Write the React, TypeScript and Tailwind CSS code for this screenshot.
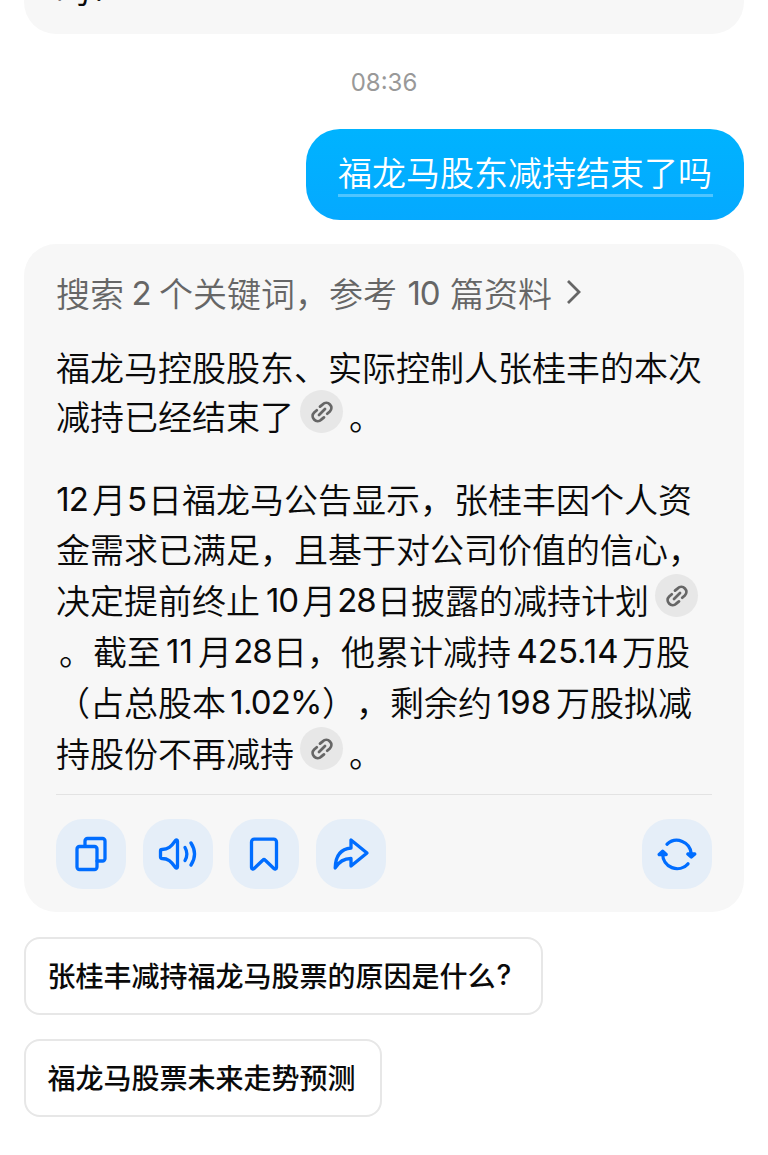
import type { ReactNode } from 'react';

function Num({ children, className }: { children: ReactNode; className: string }) {
  return <span className={`shrink-0 pt-[3px] text-center font-['Inter',sans-serif] text-[33px] font-normal ${className}`}>{children}</span>;
}

function Line({ children, className = '' }: { children: ReactNode; className?: string }) {
  return <div className={`flex items-center whitespace-pre ${className}`}>{children}</div>;
}

function LinkBadge() {
  return (
    <button className="mx-1.5 mb-[8px] flex size-[43px] shrink-0 items-center justify-center rounded-full bg-[#e7e7e7]">
      <svg width="24" height="24" viewBox="0 0 24 24" fill="none" stroke="#666" strokeWidth="2.8" strokeLinecap="round" strokeLinejoin="round">
        <path d="M9 15 15 9" />
        <path d="M10 6.600 12.800 4.300a5 5 0 0 1 7 7.200l-2.600 2.200" />
        <path d="M6.800 10.300 4.200 12.500a5 5 0 0 0 7 7.200l2.800-2.300" />
      </svg>
    </button>
  );
}

function ActionButton({ children, label }: { children: ReactNode; label: string }) {
  return (
    <button aria-label={label} className="flex size-[70px] items-center justify-center rounded-[27px] bg-[#e5eef8]">
      <svg width="40" height="40" viewBox="0 0 40 40" fill="none" stroke="#006dff" strokeWidth="3.3" strokeLinecap="round" strokeLinejoin="round">
        {children}
      </svg>
    </button>
  );
}

function Suggestion({ children, className }: { children: ReactNode; className: string }) {
  return (
    <button className={`flex h-[78px] items-center rounded-2xl border-2 border-[#e7e7e7] bg-white pb-[3px] pl-[21.5px] text-[28px] font-medium whitespace-nowrap ${className}`}>
      {children}
    </button>
  );
}

export default function App() {
  return (
    <div className="h-[1155px] w-[768px] overflow-hidden bg-white px-6 font-['Noto_Sans_CJK_SC',sans-serif] text-[34px] text-[#0a0a0a] [text-spacing-trim:space-all]">
      <div className="flex h-[34px] items-end rounded-b-[32px] bg-[#f7f7f7] px-8 pb-[28px] leading-[34px]">
        <span>吗</span>
        <span className="pl-px font-['Inter',sans-serif]">?</span>
      </div>

      <div className="mt-8 text-center font-['Inter',sans-serif] text-2xl leading-[34px] text-[#999]">08:36</div>

      <div className="mt-[29px] flex justify-end">
        <div className="h-[91px] w-[438px] rounded-[34px] bg-linear-to-b from-[#00b3ff] to-[#05a9ff] px-[31.5px] pt-[18px] text-white">
          <div className="h-[50px] border-b-[3px] border-white/30 text-center leading-[50px] font-[350]">福龙马股东减持结束了吗</div>
        </div>
      </div>

      <div className="mt-6 h-[668px] rounded-[32px] bg-[#f7f7f7] px-8 pt-[23px]">
        <Line className="h-[50px] font-[350] text-[#666]">
          <span>搜索</span>
          <Num className="w-[35px]">2</Num>
          <span>个关键词，</span>
          <span>参考</span>
          <Num className="w-[53px] tracking-[-1px]">10</Num>
          <span>篇资料</span>
          <svg className="ml-3.5" width="16" height="26" viewBox="0 0 16 26" fill="none" stroke="#666" strokeWidth="2.8">
            <path d="M2 2 13 13 2 24" />
          </svg>
        </Line>

        <div className="mt-[25px] font-[350]">
          <Line className="h-[49px]">福龙马控股股东、实际控制人张桂丰的本次</Line>
          <Line className="h-[49px]">
            减持已经结束了
            <LinkBadge />
            。
          </Line>
        </div>

        <div className="mt-[33px] font-[350]">
          <Line className="h-[50px]">
            <Num className="w-9 pr-1 tracking-[-1px]">12</Num>月<Num className="w-[22px]">5</Num>日福龙马公告显示，张桂丰因个人资
          </Line>
          <Line className="h-[51px]">金需求已满足，且基于对公司价值的信心，</Line>
          <Line className="h-[51px]">
            决定提前终止<Num className="w-[42px] pl-0.5 tracking-[-1px]">10</Num>月<Num className="w-[41px] tracking-[-1px]">28</Num>日披露的减持计划
            <LinkBadge />
          </Line>
          <Line className="h-[51px]">
            <span className="ml-[3px]">。截至</span>
            <Num className="w-[37px]">11</Num>月<Num className="w-[41px] tracking-[-1px]">28</Num>日，他累计减持<Num className="w-[111px] pl-0.5">425.14</Num>万股
          </Line>
          <Line className="h-[51px]">
            （占总股本<Num className="w-24 pl-1 tracking-[-0.8px]">1.02%</Num>
            <span>）</span>
            <span>，</span>
            剩余约<Num className="w-16">198</Num>万股拟减
          </Line>
          <Line className="h-[51px]">
            持股份不再减持
            <LinkBadge />
            。
          </Line>
        </div>

        <div className="mt-4 border-t border-[#e3e3e3]" />

        <div className="mt-6 flex gap-[16.5px]">
          <ActionButton label="复制">
            <path d="M14 12V7a2.500 2.500 0 0 1 2.500-2.500h15A2.500 2.500 0 0 1 34 7v17.500a2.500 2.500 0 0 1-2.500 2.500H26" />
            <rect x="6" y="12.500" width="20" height="23" rx="2.500" />
          </ActionButton>
          <ActionButton label="朗读">
            <path d="M4 15.500c6 0 9-2.500 13.500-9 1-1 2-.6 2 .8v25.400c0 1.400-1 1.800-2 .8C13 27 10 24.500 4 24.500q-1.500 0-1.500-1.500v-6q0-1.500 1.500-1.500Z" />
            <path d="M27 13.500c2.300 4 2.300 9 0 13" />
            <path d="M33 9c4.500 7 4.500 15 0 22" />
          </ActionButton>
          <ActionButton label="收藏">
            <path d="M7.500 8a2.800 2.800 0 0 1 2.800-2.800h19.400A2.800 2.800 0 0 1 32.500 8v25.500c0 1.600-1.500 2-2.600 1L21 26q-1-1-2 0l-8.900 8.500c-1.100 1-2.600.6-2.600-1Z" />
          </ActionButton>
          <ActionButton label="分享">
            <path d="M20 6v8C9 15 4.500 22 4.200 34 8 27.500 13 24.500 20 24.500V32L36 19Z" />
          </ActionButton>
          <div className="ml-auto">
            <ActionButton label="重新生成">
              <path d="M10 10.200A14.500 14.500 0 0 1 34.300 20" />
              <path d="M30.800 20h7L34.300 23Z" />
              <path d="M31 29.800A14.500 14.500 0 0 1 5.700 20" />
              <path d="M2.200 20.500h7L5.700 17.200Z" />
            </ActionButton>
          </div>
        </div>
      </div>

      <div className="mt-[25px] flex flex-col items-start gap-6">
        <Suggestion className="w-[519px]">
          张桂丰减持福龙马股票的原因是什么<span className="pl-px font-['Inter',sans-serif]">?</span>
        </Suggestion>
        <Suggestion className="w-[358px]">福龙马股票未来走势预测</Suggestion>
      </div>
    </div>
  );
}
